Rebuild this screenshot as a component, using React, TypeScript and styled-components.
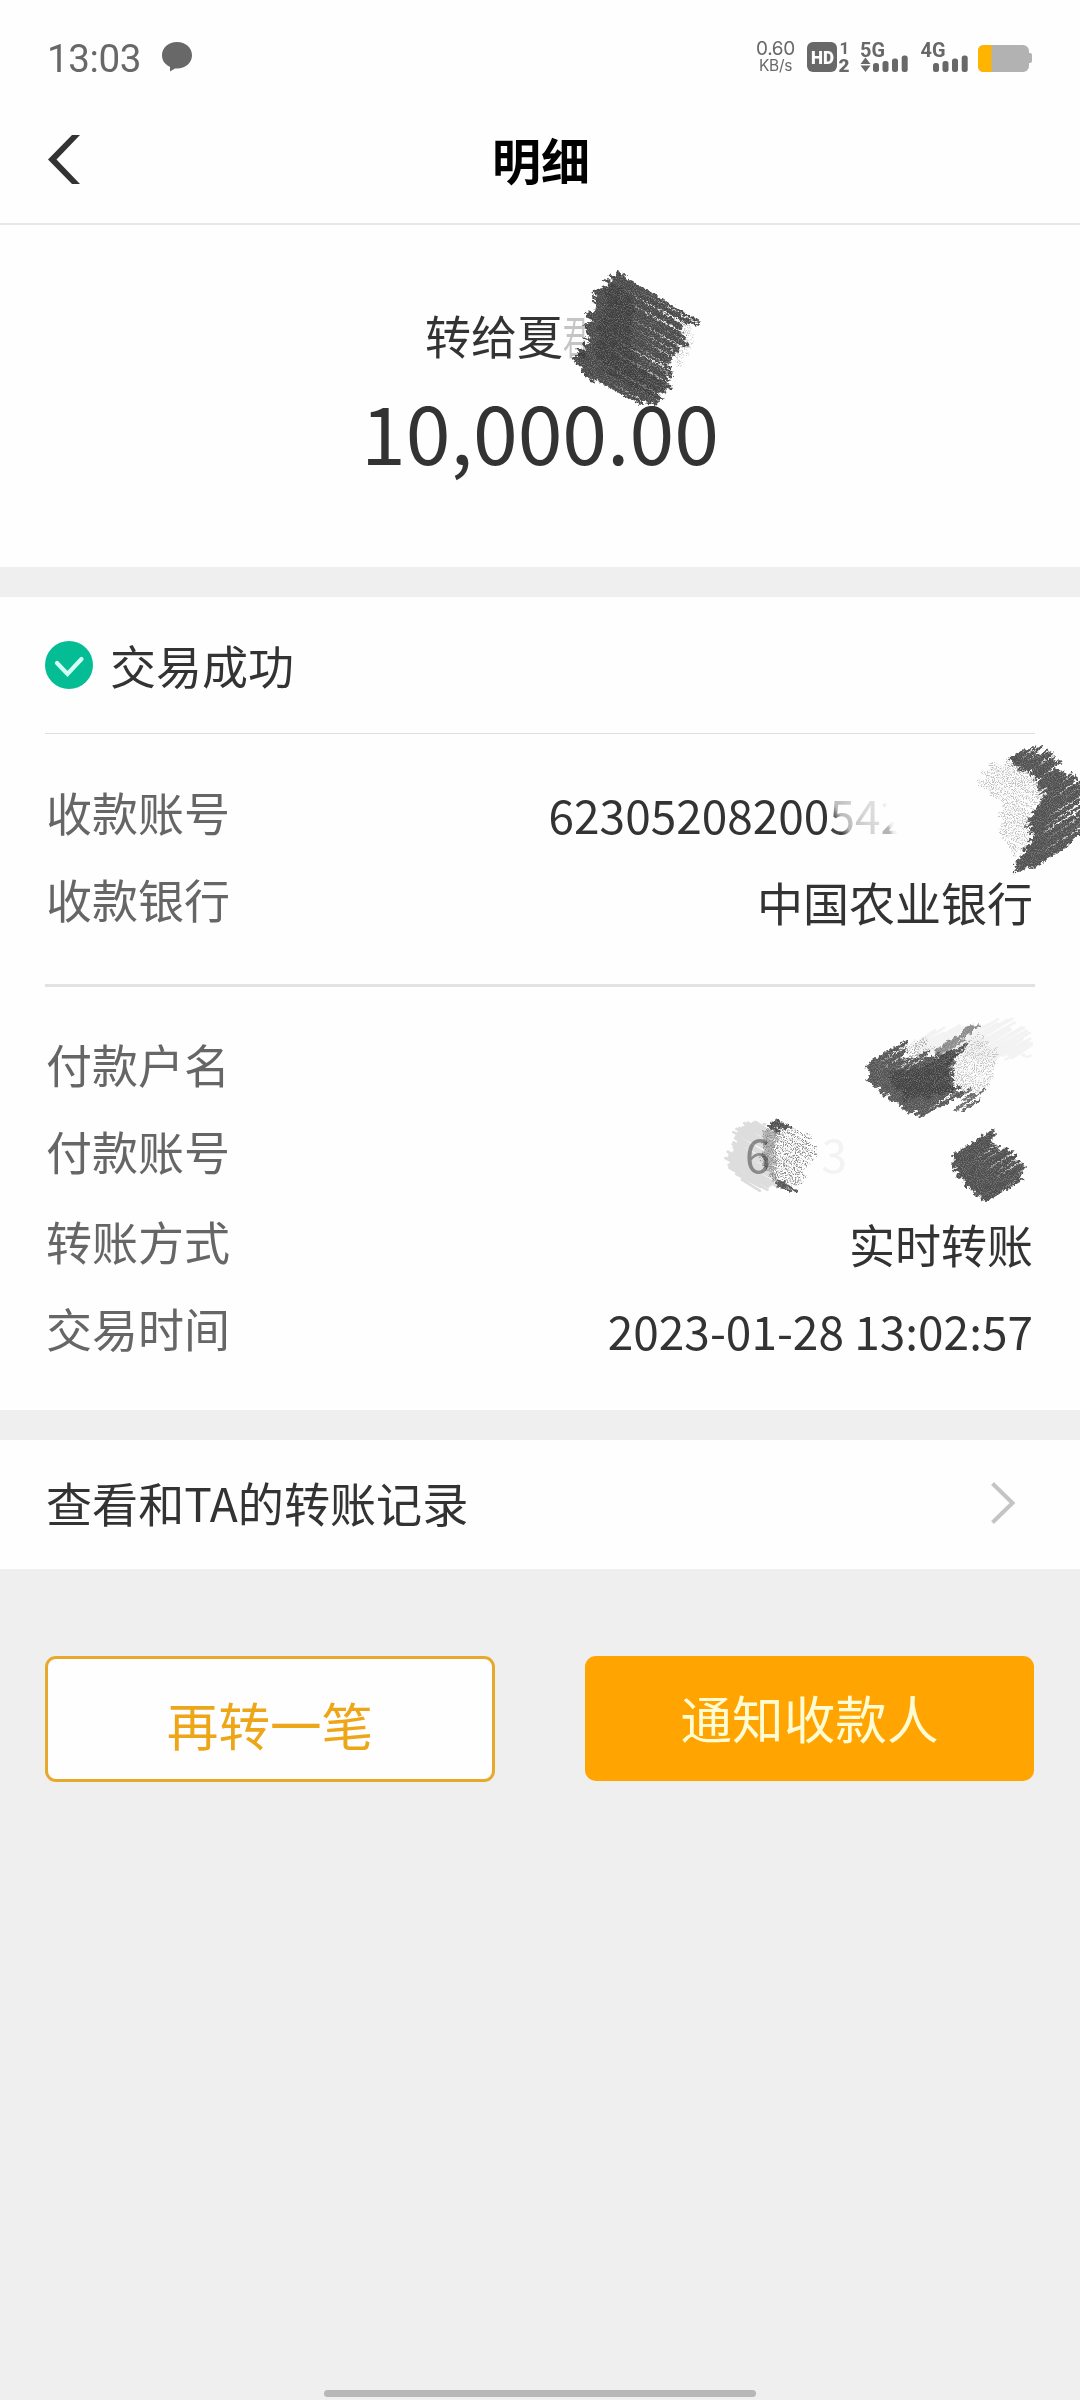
import React from "react";
import styled, { createGlobalStyle } from "styled-components";

const Global = createGlobalStyle`
  * { box-sizing: border-box; }
  body {
    margin: 0;
    background: #efefef;
    font-family: "Noto Sans CJK SC", "Noto Sans", sans-serif;
    color: #333;
  }
`;

const Page = styled.div`
  position: relative;
  display: flex;
  flex-direction: column;
  width: 1080px;
  height: 2400px;
  overflow: hidden;
  background: #efefef;
`;

const StatusBar = styled.div`
  display: flex;
  justify-content: space-between;
  height: 100px;
  padding: 42px 48px 0 47px;
  background: #fefefe;
  color: #686868;
`;

const StatusLeft = styled.div`
  display: flex;
  gap: 22px;
`;

const Clock = styled.div`
  font: 400 38.6px/34px Roboto, sans-serif;
  width: 93px;
  white-space: nowrap;
  letter-spacing: -0.4px;
`;

const StatusRight = styled.div`
  display: flex;
  align-items: flex-start;
`;

const Speed = styled.div`
  display: flex;
  flex-direction: column;
  align-items: center;
  width: 39px;
  margin: -5px 12px 0 0;
  font: 400 19px/23px "Inter", sans-serif;
  letter-spacing: -0.3px;
`;

const SpeedUnit = styled.span`
  font-size: 15.5px;
  line-height: 19px;
  margin-top: -4px;
`;

const SignalSvg = styled.svg`
  margin-top: -6px;
`;

const NavBar = styled.div`
  display: grid;
  grid-template-columns: 120px 1fr 120px;
  align-items: center;
  height: 125px;
  padding-bottom: 5px;
  background: #fefefe;
  border-bottom: 2px solid #e8e8e8;
`;

const BackButton = styled.button`
  display: flex;
  border: 0;
  background: none;
  padding: 0 0 0 48px;
`;

const Title = styled.h1`
  margin: 0;
  padding-left: 2px;
  text-align: center;
  font-size: 49px;
  font-weight: 700;
  line-height: 60px;
  color: #000;
`;

const Summary = styled.section`
  display: flex;
  flex-direction: column;
  align-items: center;
  height: 342px;
  padding-top: 79px;
  background: #fefefe;
`;

const Recipient = styled.div`
  width: 230px;
  font-size: 46px;
  line-height: 60px;
  white-space: nowrap;
`;

const CoveredChar = styled.span`
  display: inline-block;
  color: #c4c4c4;
  transform: scaleX(0.55);
  transform-origin: left;
`;

const Amount = styled.div`
  margin-top: 16px;
  font-size: 80.6px;
  line-height: 100px;
`;

const Panel = styled.section`
  height: 813px;
  margin-top: 30px;
  padding: 0 45px;
  background: #fefefe;
`;

const StatusRow = styled.div`
  display: flex;
  align-items: center;
  gap: 17px;
  height: 136px;
  font-size: 46px;
  line-height: 60px;
`;

const StatusText = styled.span`
  margin-top: -2px;
`;

const Divider = styled.div<{ $size: number }>`
  height: ${(p) => p.$size}px;
  background: ${(p) => (p.$size > 1 ? "#e2e2e2" : "#dedede")};
`;

const Group = styled.div<{ $top: number; $bottom: number }>`
  padding: ${(p) => p.$top}px 2px ${(p) => p.$bottom}px 1px;
`;

const Row = styled.div<{ $gap?: number }>`
  display: flex;
  justify-content: space-between;
  align-items: center;
  height: 87px;
  margin-top: ${(p) => p.$gap ?? 0}px;
  font-size: 46px;
  line-height: 60px;
`;

const Label = styled.span`
  color: #666;
`;

const Value = styled.span<{ $hidden?: number }>`
  margin-top: 6px;
  padding-right: ${(p) => p.$hidden ?? 0}px;
  white-space: nowrap;
`;

const Fading = styled.span`
  color: transparent;
  background: linear-gradient(60deg, #444 24%, #bbb 34%, #d6d6d6 60%, #e9e9e9 100%);
  -webkit-background-clip: text;
  background-clip: text;
`;

const Remnant = styled.span`
  color: transparent;
  background: linear-gradient(70deg, #b4b4b4 30%, #e6e6e6 36%, transparent 46%);
  -webkit-background-clip: text;
  background-clip: text;
`;

const Ghost = styled.span<{ $tone: string; $space?: number }>`
  color: ${(p) => p.$tone};
  margin-left: ${(p) => p.$space ?? 0}px;
`;

const LinkRow = styled.div`
  display: flex;
  justify-content: space-between;
  align-items: center;
  height: 129px;
  margin-top: 30px;
  padding: 0 64px 4px 46px;
  background: #fefefe;
  font-size: 46.1px;
  line-height: 60px;
`;

const LinkText = styled.span`
  margin-top: -2px;
`;

const Actions = styled.div`
  display: grid;
  grid-template-columns: 450px 449px;
  justify-content: space-between;
  padding: 87px 46px 0 45px;
`;

const ActionButton = styled.button<{ $primary?: boolean }>`
  height: ${(p) => (p.$primary ? 125 : 126)}px;
  border: ${(p) => (p.$primary ? "0" : "3px solid #e6a92c")};
  border-radius: 11px;
  padding: ${(p) => (p.$primary ? "0 0 4px" : "10px 0 0")};
  background: ${(p) => (p.$primary ? "#ffa400" : "#fefefe")};
  color: ${(p) => (p.$primary ? "#fffbd2" : "#eea619")};
  font-family: inherit;
  font-size: 51.6px;
  line-height: 60px;
`;

const HomeBar = styled.div`
  width: 432px;
  height: 7px;
  margin: auto auto 3px;
  border-radius: 4px;
  background: #b7b7b7;
`;

const Overlay = styled.svg`
  position: absolute;
  left: 0;
  top: 0;
  pointer-events: none;
  mix-blend-mode: multiply;
`;

type Pt = [number, number];

interface Patch {
  points: Pt[];
  angle: number;
  color: string;
  spacing?: number;
  width?: number;
  jitter?: number;
  opacity?: number;
  grain?: "coarse" | "sparse" | "none";
}

function random(seed: number) {
  let s = seed;
  return () => {
    s = (s * 1664525 + 1013904223) % 4294967296;
    return s / 4294967296;
  };
}

// Fills a polygon with ragged parallel pencil strokes.
function hatch(patch: Patch, seed: number): string {
  const rnd = random(seed * 7919 + 13);
  const a = (patch.angle * Math.PI) / 180;
  const c = Math.cos(a);
  const s = Math.sin(a);
  const rot = patch.points.map(([x, y]): Pt => [x * c + y * s, -x * s + y * c]);
  const ys = rot.map((p) => p[1]);
  const step = patch.spacing ?? 2.2;
  const jitter = patch.jitter ?? 4;
  let d = "";
  for (let v = Math.min(...ys) + 0.7; v < Math.max(...ys); v += step) {
    const hits: number[] = [];
    rot.forEach((p, i) => {
      const q = rot[(i + 1) % rot.length];
      if (p[1] <= v !== q[1] <= v) hits.push(p[0] + ((v - p[1]) / (q[1] - p[1])) * (q[0] - p[0]));
    });
    hits.sort((m, n) => m - n);
    for (let i = 0; i + 1 < hits.length; i += 2) {
      const u1 = hits[i] + 2 + (rnd() - 0.5) * 2 * jitter;
      const u2 = hits[i + 1] - 2 + (rnd() - 0.5) * 2 * jitter;
      const w = v + (rnd() - 0.5) * 3;
      d += `M${(u1 * c - v * s).toFixed(1)} ${(u1 * s + v * c).toFixed(1)}L${(u2 * c - w * s).toFixed(1)} ${(u2 * s + w * c).toFixed(1)}`;
    }
  }
  return d;
}

const patches: Patch[] = [
  { points: [[676, 318], [690, 326], [694, 342], [680, 366], [670, 350]], angle: 28, color: "#ccc", grain: "sparse" },
  {
    points: [[618, 272], [700, 323], [682, 330], [685, 345], [670, 358], [671, 384], [663, 398], [642, 405], [584, 375], [571, 355], [586, 345], [586, 322], [590, 312], [597, 292], [605, 280]],
    angle: 29, color: "#484848", jitter: 5,
  },
  {
    points: [[610, 284], [636, 298], [632, 340], [640, 365], [664, 385], [652, 400], [606, 374], [594, 352], [601, 310]],
    angle: 29, color: "#363636", spacing: 3.4, opacity: 0.6,
  },
  {
    points: [[1032, 745], [1042, 749], [1054, 758], [1064, 770], [1084, 784], [1084, 833], [1055, 855], [1037, 866], [1012, 872], [1024, 850], [1032, 837], [1026, 823], [1045, 795], [1032, 776], [1007, 760]],
    angle: -33, color: "#505050", jitter: 5,
  },
  {
    points: [[977, 785], [988, 767], [1005, 760], [1028, 772], [1046, 793], [1032, 820], [1030, 840], [1016, 856], [1000, 834], [1001, 800]],
    angle: 29, color: "#c2c2c2", grain: "sparse", spacing: 3,
  },
  {
    points: [[911, 1042], [940, 1029], [980, 1024], [1010, 1021], [1030, 1037], [1030, 1056], [990, 1060], [960, 1052], [920, 1055]],
    angle: -30, color: "#f4f4f4", grain: "none", jitter: 7,
  },
  {
    points: [[955, 1048], [982, 1032], [998, 1050], [994, 1080], [976, 1096], [954, 1085]],
    angle: -35, color: "#c4c4c4", grain: "sparse", spacing: 3,
  },
  { points: [[936, 1050], [972, 1025], [982, 1026], [950, 1049], [938, 1057]], angle: -32, color: "#8b8b8b", jitter: 3 },
  { points: [[905, 1048], [925, 1038], [934, 1048], [908, 1066]], angle: -33, color: "#a8a8a8", grain: "sparse" },
  {
    points: [[865, 1065], [910, 1037], [901, 1064], [933, 1048], [929, 1058], [967, 1044], [952, 1066], [953, 1083], [964, 1094], [920, 1117], [888, 1100], [867, 1078]],
    angle: -33, color: "#555",
  },
  {
    points: [[892, 1070], [912, 1068], [928, 1062], [956, 1049], [950, 1080], [960, 1092], [930, 1097], [905, 1099], [890, 1085]],
    angle: -33, color: "#3c3c3c", spacing: 2.6, opacity: 0.75,
  },
  { points: [[952, 1114], [968, 1091], [990, 1089], [968, 1110]], angle: -35, color: "#666", spacing: 4 },
  {
    points: [[726, 1163], [736, 1129], [750, 1119], [769, 1126], [774, 1140], [776, 1180], [773, 1190], [757, 1190], [740, 1180]],
    angle: 29, color: "#dedede", grain: "none",
  },
  {
    points: [[763, 1130], [777, 1132], [776, 1180], [762, 1165]],
    angle: 29, color: "#a6a6a6", spacing: 2.6, opacity: 0.8, jitter: 2,
  },
  {
    points: [[765, 1127], [785, 1125], [812, 1136], [818, 1150], [808, 1170], [800, 1190], [774, 1181], [761, 1160]],
    angle: 29, color: "#8c8c8c", grain: "sparse", spacing: 3,
  },
  { points: [[767, 1126], [776, 1119], [790, 1127], [778, 1134]], angle: 20, color: "#505050", jitter: 2 },
  { points: [[774, 1180], [784, 1181], [798, 1192], [780, 1189]], angle: 29, color: "#555", jitter: 2 },
  {
    points: [[952, 1156], [995, 1129], [993, 1143], [1006, 1149], [1026, 1165], [1020, 1180], [988, 1201], [973, 1193], [963, 1181], [954, 1168]],
    angle: -32, color: "#4e4e4e",
  },
];

const filters = { coarse: "url(#coarse)", sparse: "url(#sparse)", none: undefined };

function Scribbles() {
  return (
    <Overlay width="1080" height="1230" viewBox="0 0 1080 1230">
      <defs>
        <filter id="coarse" x="-10%" y="-10%" width="120%" height="120%" colorInterpolationFilters="sRGB">
          <feTurbulence type="fractalNoise" baseFrequency="0.3" numOctaves="2" seed="4" result="warp" />
          <feTurbulence type="fractalNoise" baseFrequency="0.93" numOctaves="1" seed="7" result="n" />
          <feDisplacementMap in="SourceGraphic" in2="warp" scale="6" xChannelSelector="R" yChannelSelector="G" result="d" />
          <feColorMatrix in="n" values="0 0 0 0 1  0 0 0 0 1  0 0 0 0 1  3 0 0 0 -1.35" result="g" />
          <feComposite in="g" in2="d" operator="in" result="light" />
          <feComponentTransfer in="light" result="soft">
            <feFuncA type="linear" slope="0.32" />
          </feComponentTransfer>
          <feMerge>
            <feMergeNode in="d" />
            <feMergeNode in="soft" />
          </feMerge>
        </filter>
        <filter id="sparse" x="-10%" y="-10%" width="120%" height="120%" colorInterpolationFilters="sRGB">
          <feTurbulence type="fractalNoise" baseFrequency="0.9" numOctaves="2" seed="9" result="n" />
          <feDisplacementMap in="SourceGraphic" in2="n" scale="5" xChannelSelector="R" yChannelSelector="G" result="d" />
          <feColorMatrix in="n" values="0 0 0 0 0  0 0 0 0 0  0 0 0 0 0  6 0 0 0 -2.8" result="g" />
          <feComposite in="d" in2="g" operator="in" />
        </filter>
      </defs>
      {patches.map((p, i) => (
        <g key={i} filter={filters[p.grain ?? "coarse"]} opacity={p.opacity ?? 1}>
          <path d={hatch(p, i + 1)} stroke={p.color} strokeWidth={p.width ?? 2.7} strokeLinecap="round" fill="none" />
        </g>
      ))}
    </Overlay>
  );
}

function BubbleIcon() {
  return (
    <svg width="31" height="31" viewBox="0 0 31 31" fill="#686868">
      <path d="M15 0C23.500 0 30 5.600 30 13.200S23.500 26.400 15 26.400c-.8 0-1.300 0-2 .2L8 29.500V24.800C3 22.500 0 18.500 0 13.200 0 5.600 6.500 0 15 0z" />
    </svg>
  );
}

function Bars({ x }: { x: number }) {
  return (
    <>
      <rect x={x} y="21" width="6" height="9" rx="2.5" />
      <rect x={x + 9.5} y="19" width="6" height="11" rx="2.5" />
      <rect x={x + 19} y="16.5" width="6" height="13.5" rx="2.5" />
      <rect x={x + 28.7} y="13.5" width="6" height="16.5" rx="2.5" />
    </>
  );
}

function SignalIcons() {
  const font = { fontFamily: "Roboto, sans-serif", fontWeight: 900 };
  return (
    <SignalSvg width="225" height="44" viewBox="807 -6 225 44" fill="#686868">
      <rect x="807" y="0" width="30" height="30" rx="6" />
      <text x="811" y="21.5" {...font} fontSize="18" fill="#fefefe" textLength="23" lengthAdjust="spacingAndGlyphs">HD</text>
      <text x="839.5" y="12" {...font} fontSize="17" fontWeight={700}>1</text>
      <text x="838.5" y="30" {...font} fontSize="17.5" textLength="11" lengthAdjust="spacingAndGlyphs">2</text>
      <text x="860" y="14.5" {...font} fontSize="20.5" fontWeight={700} textLength="25" lengthAdjust="spacingAndGlyphs">5G</text>
      <path d="M865.500 15.500l5 6.500h-10zM865.500 30l-5-6.500h10z" />
      <Bars x={873} />
      <text x="920.5" y="14.5" {...font} fontSize="20.5" fontWeight={700} textLength="25" lengthAdjust="spacingAndGlyphs">4G</text>
      <Bars x={933} />
      <rect x="978" y="3" width="51" height="27" rx="6" fill="#b2b2b2" />
      <path d="M1028 11h2q2 0 2 2v6q0 2-2 2h-2z" fill="#b2b2b2" />
      <path d="M991.500 3v27H984q-6 0-6-6V9q0-6 6-6z" fill="#ffb400" />
    </SignalSvg>
  );
}

export default function App() {
  return (
    <>
      <Global />
      <Page>
        <StatusBar>
          <StatusLeft>
            <Clock>13:03</Clock>
            <BubbleIcon />
          </StatusLeft>
          <StatusRight>
            <Speed>
              0.60
              <SpeedUnit>KB/s</SpeedUnit>
            </Speed>
            <SignalIcons />
          </StatusRight>
        </StatusBar>
        <NavBar>
          <BackButton aria-label="返回">
            <svg width="32" height="49" viewBox="0 0 32 49" fill="#333">
              <path d="M24 0h8L8.500 24.500 32 49h-8L0 24.500z" />
            </svg>
          </BackButton>
          <Title>明细</Title>
        </NavBar>
        <Summary>
          <Recipient>
            转给夏<CoveredChar>君</CoveredChar>
          </Recipient>
          <Amount>10,000.00</Amount>
        </Summary>
        <Panel>
          <StatusRow>
            <svg width="48" height="48" viewBox="0 0 48 48">
              <circle cx="24" cy="24" r="24" fill="#04bd95" />
              <path d="M12 22l10.500 11L36.500 18" fill="none" stroke="#d4fff3" strokeWidth="4.2" strokeLinecap="round" />
            </svg>
            <StatusText>交易成功</StatusText>
          </StatusRow>
          <Divider $size={1} />
          <Group $top={33} $bottom={43}>
            <Row>
              <Label>收款账号</Label>
              <Value $hidden={127}>
                62305208200<Fading>54</Fading>
                <Remnant>2</Remnant>
              </Value>
            </Row>
            <Row>
              <Label>收款银行</Label>
              <Value>中国农业银行</Value>
            </Row>
          </Group>
          <Divider $size={3} />
          <Group $top={32} $bottom={40}>
            <Row>
              <Label>付款户名</Label>
            </Row>
            <Row>
              <Label>付款账号</Label>
              <Value $hidden={186}>
                <Ghost $tone="#9c9c9c">6</Ghost>
                <Ghost $tone="#f3f3f3" $space={51}>3</Ghost>
              </Value>
            </Row>
            <Row $gap={3}>
              <Label>转账方式</Label>
              <Value>实时转账</Value>
            </Row>
            <Row>
              <Label>交易时间</Label>
              <Value>2023-01-28 13:02:57</Value>
            </Row>
          </Group>
        </Panel>
        <LinkRow>
          <LinkText>查看和TA的转账记录</LinkText>
          <svg width="25" height="42" viewBox="0 0 25 42">
            <path d="M1.500 1.500L21.500 21 1.500 40.500" fill="none" stroke="#c4c4c4" strokeWidth="4" />
          </svg>
        </LinkRow>
        <Actions>
          <ActionButton>再转一笔</ActionButton>
          <ActionButton $primary>通知收款人</ActionButton>
        </Actions>
        <HomeBar />
        <Scribbles />
      </Page>
    </>
  );
}
